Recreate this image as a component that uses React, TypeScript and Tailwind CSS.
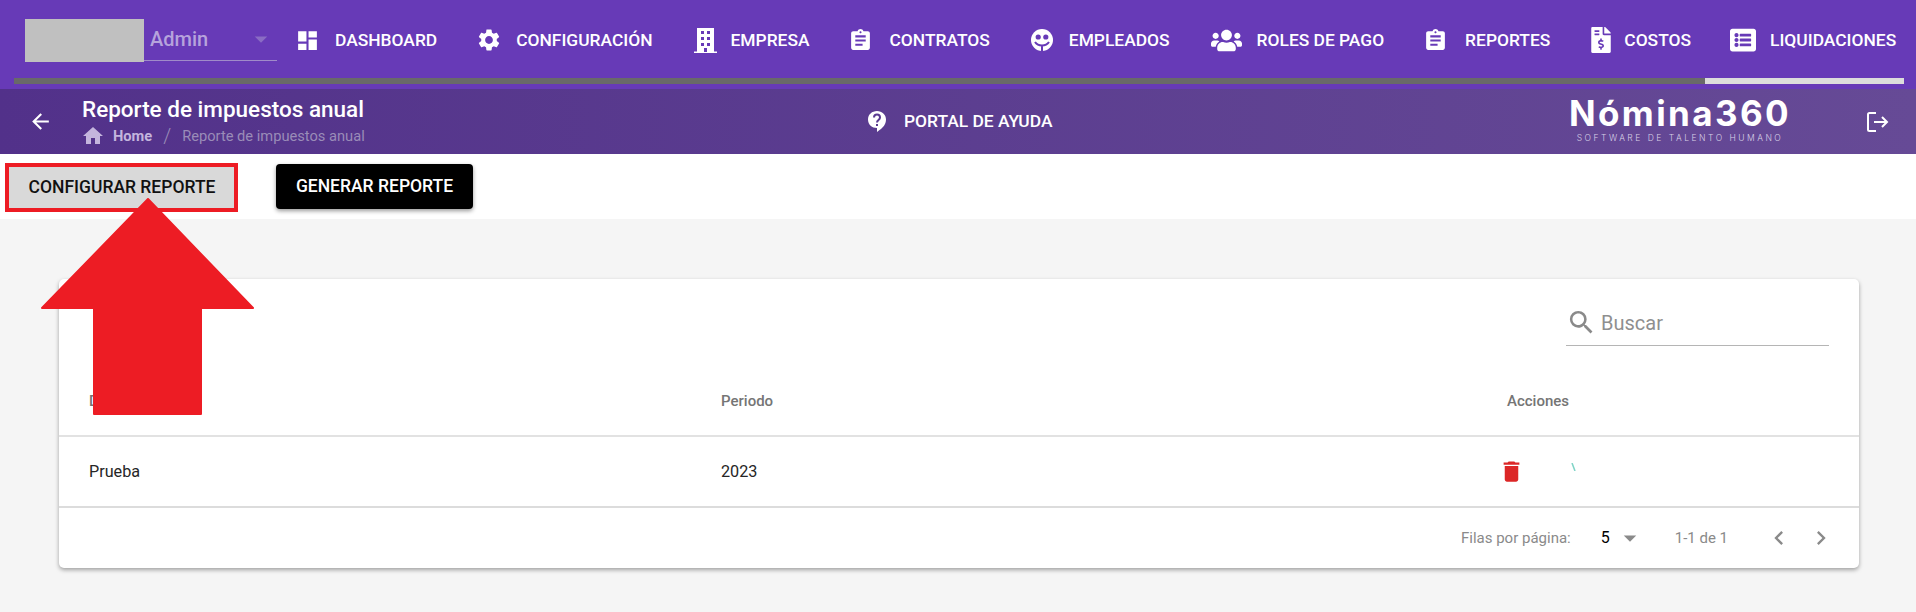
import { ReactNode } from "react"
import { FaFileInvoiceDollar, FaListAlt, FaUsers } from "react-icons/fa"
import {
    MdArrowBack,
    MdArrowDropDown,
    MdAssignment,
    MdChevronLeft,
    MdChevronRight,
    MdDashboard,
    MdDelete,
    MdHome,
    MdSearch,
    MdSettings,
} from "react-icons/md"

function BuildingIcon() {
    return (
        <svg width="23" height="25" viewBox="0 0 23 25" className="shrink-0">
            <path fill="#fff" d="M3 0h17v24H3z" />
            <path fill="#fff" d="M0 23.5h23V25H0z" />
            <path
                fill="#673ab7"
                d="M7 3h3v3H7zM13 3h3v3h-3zM7 9h3v3H7zM13 9h3v3h-3zM7 15h3v3H7zM13 15h3v3h-3zM10 20h3v4h-3z"
            />
        </svg>
    )
}

function FaceIcon() {
    return (
        <svg width="22" height="22" viewBox="0 0 22 22" className="shrink-0">
            <circle cx="11" cy="11" r="11" fill="#fff" />
            <circle cx="7.2" cy="8" r="2.6" fill="#673ab7" />
            <circle cx="14.8" cy="8" r="2.6" fill="#673ab7" />
            <path d="M4 13c2 3 5 3.500 7 3.500s5-.5 7-3.500M11 16v6" fill="none" stroke="#673ab7" strokeWidth="2" />
        </svg>
    )
}

function HelpIcon() {
    return (
        <svg width="18" height="21" viewBox="0 0 18 21">
            <path fill="#fff" d="M9 0c5 0 9 3.600 9 8.500 0 5-3.500 8.500-6.500 10.500L9 21v-4C4 17 0 13.500 0 8.500S4 0 9 0z" />
            <path d="M6 6.500C6 4.500 7.500 3.500 9 3.500s3 1 3 3c0 2.500-3 2.500-3 5" fill="none" stroke="#5a3b91" strokeWidth="2" />
            <path fill="#5a3b91" d="M8 13h2v2H8z" />
        </svg>
    )
}

function LogoutIcon() {
    return (
        <svg width="22" height="20" viewBox="0 0 22 20" fill="none" stroke="#fff" strokeWidth="2">
            <path d="M9 1H2.500C1.700 1 1 1.700 1 2.500v15c0 .8.700 1.500 1.500 1.500H9" />
            <path d="M7 10h13M15 5l5 5-5 5" />
        </svg>
    )
}

const navItems: { label: string; box: string; icon: ReactNode }[] = [
    { label: "DASHBOARD", box: "w-[19px] mr-[18px]", icon: <MdDashboard size={25} className="shrink-0" /> },
    { label: "CONFIGURACIÓN", box: "w-[21px] mr-[17px]", icon: <MdSettings size={26} className="shrink-0" /> },
    { label: "EMPRESA", box: "w-[23px] mr-[14px]", icon: <BuildingIcon /> },
    { label: "CONTRATOS", box: "w-[20px] mr-[19px]", icon: <MdAssignment size={25} className="shrink-0" /> },
    { label: "EMPLEADOS", box: "w-[22px] mr-[16px]", icon: <FaceIcon /> },
    { label: "ROLES DE PAGO", box: "w-[31px] mr-[15px]", icon: <FaUsers size={31} className="shrink-0" /> },
    { label: "REPORTES", box: "w-[21px] mr-[19px]", icon: <MdAssignment size={25} className="shrink-0" /> },
    { label: "COSTOS", box: "w-[20px] mr-[13px]", icon: <FaFileInvoiceDollar size={26} className="shrink-0" /> },
    { label: "LIQUIDACIONES", box: "ml-[-2px] w-[26px] mr-[14px]", icon: <FaListAlt size={26} className="shrink-0" /> },
]

export default function App() {
    return (
        <div className="relative h-[612px] w-full overflow-hidden bg-[#f5f5f5] font-['Roboto',sans-serif]">
            <header className="h-[89px] bg-[#673ab7]">
                <div className="flex h-[78px] items-start pl-[25px]">
                    <div className="mt-[19px] h-[43px] w-[119px] bg-[#c0c0c0]" />
                    <div className="mt-[19px] flex h-[42px] w-[133px] items-center border-b border-[#a08bc9] pl-[6px] pb-[2px]">
                        <span className="text-[20px] font-medium text-[#b6a3dc]">Admin</span>
                        <MdArrowDropDown size={30} className="ml-auto mr-[1px] text-[#8a6cc4]" />
                    </div>
                    <nav className="ml-[21px] mt-[27px] flex items-center gap-[41px] text-white">
                        {navItems.map((item) => (
                            <div key={item.label} className="flex h-[26px] items-center">
                                <div className={`flex justify-center ${item.box}`}>{item.icon}</div>
                                <span className="text-[17.4px] font-medium whitespace-nowrap">{item.label}</span>
                            </div>
                        ))}
                    </nav>
                </div>
                <div className="ml-[14px] flex h-[6px] w-[1890px] justify-end bg-[#696969]">
                    <div className="h-full w-[199px] bg-[#dcdcdc]" />
                </div>
            </header>

            <div className="flex h-[65px] items-center bg-gradient-to-r from-[#52318a] to-[#664a96] text-white">
                <MdArrowBack size={25} className="ml-[28px]" />
                <div className="ml-[29px] w-[300px] pb-[2px]">
                    <div className="text-[22.5px] leading-[26px] font-medium whitespace-nowrap">Reporte de impuestos anual</div>
                    <div className="mt-[4px] flex h-[20px] items-center text-[14.67px] whitespace-nowrap">
                        <MdHome size={24} className="ml-[-1px] text-[#c4b5dd]" />
                        <span className="ml-[8px] font-bold text-[#c4b5dd]">Home</span>
                        <span className="ml-[11px] text-[20px] font-light text-[#9a8cb8]">/</span>
                        <span className="ml-[11px] text-[#9a8cb8]">Reporte de impuestos anual</span>
                    </div>
                </div>
                <div className="ml-[486px] flex w-[186px] items-center">
                    <HelpIcon />
                    <span className="ml-[18px] text-[17.4px] font-medium whitespace-nowrap">PORTAL DE AYUDA</span>
                </div>
                <div className="ml-[515px] flex w-[222px] flex-col items-center">
                    <span className="font-['Inter',sans-serif] text-[35px] leading-[28px] font-bold tracking-[2.4px] whitespace-nowrap">Nómina360</span>
                    <span className="mt-[5px] font-['Inter',sans-serif] text-[8.5px] leading-[12px] font-light tracking-[2.5px] whitespace-nowrap text-[#d8d0e6]">
                        SOFTWARE DE TALENTO HUMANO
                    </span>
                </div>
                <div className="ml-[76px]">
                    <LogoutIcon />
                </div>
            </div>

            <div className="flex h-[65px] items-start bg-white pl-[5px] pt-[9px]">
                <button className="flex h-[49px] w-[233px] items-center justify-center border-[4px] border-[#ed1c24] bg-[#d9d9d9] pb-[1px] pl-[1px] text-[17.5px] font-medium text-[#111]">
                    CONFIGURAR REPORTE
                </button>
                <button className="ml-[38px] mt-[1px] flex h-[45px] w-[197px] items-center justify-center rounded-[4px] bg-black text-[17.5px] font-medium text-white shadow-[0_2px_4px_rgba(0,0,0,0.4)]">
                    GENERAR REPORTE
                </button>
            </div>

            <main className="pl-[59px] pt-[60px]">
                <div className="h-[289px] w-[1800px] rounded-[5px] bg-white shadow-[0_2px_4px_rgba(0,0,0,0.35)]">
                    <div className="flex h-[93px] justify-end pr-[30px] pt-[27px]">
                        <div className="flex h-[40px] w-[263px] items-center border-b border-[#b5b5b5] pb-[6px]">
                            <MdSearch size={31} className="text-[#8a8a8a]" />
                            <span className="ml-[4px] text-[20px] text-[#8f8f8f]">Buscar</span>
                        </div>
                    </div>
                    <div className="grid h-[65px] grid-cols-[632px_786px_1fr] items-center border-b-[2px] border-[#e2e2e2] pb-[4px] pl-[30px] text-[15px] font-medium text-[#757575]">
                        <span>Descripción</span>
                        <span>Periodo</span>
                        <span>Acciones</span>
                    </div>
                    <div className="grid h-[71px] grid-cols-[632px_786px_1fr] items-center border-b-[2px] border-[#dcdcdc] pl-[30px] text-[16.2px] text-[#262626]">
                        <span className="pt-[1px]">Prueba</span>
                        <span className="pt-[1px]">2023</span>
                        <div className="ml-[-9px] flex items-center">
                            <MdDelete size={27} className="text-[#dc2626]" />
                            <svg width="5" height="8" viewBox="0 0 5 8" className="ml-[46px] mb-[10px]">
                                <path d="M1 0l3 8" stroke="#7fd4c6" strokeWidth="1.500" />
                            </svg>
                        </div>
                    </div>
                    <div className="flex h-[60px] items-center justify-end pr-[24px] text-[15px] text-[#8a8a8a]">
                        <span>Filas por página:</span>
                        <span className="ml-[30px] text-[16px] text-black">5</span>
                        <MdArrowDropDown size={30} className="ml-[5px] text-[#8a8a8a]" />
                        <span className="ml-[30px]">1-1 de 1</span>
                        <MdChevronLeft size={28} className="ml-[37px]" />
                        <MdChevronRight size={28} className="ml-[14px]" />
                    </div>
                </div>
            </main>

            <svg width="215" height="217" viewBox="-1 -1 215 217" className="absolute left-[40px] top-[198px]">
                <path
                    d="M107 0L212 109H160V215H53V109H1Z"
                    fill="#ed1c24"
                    stroke="#ed1c24"
                    strokeWidth="2"
                    strokeLinejoin="round"
                />
            </svg>
        </div>
    )
}
